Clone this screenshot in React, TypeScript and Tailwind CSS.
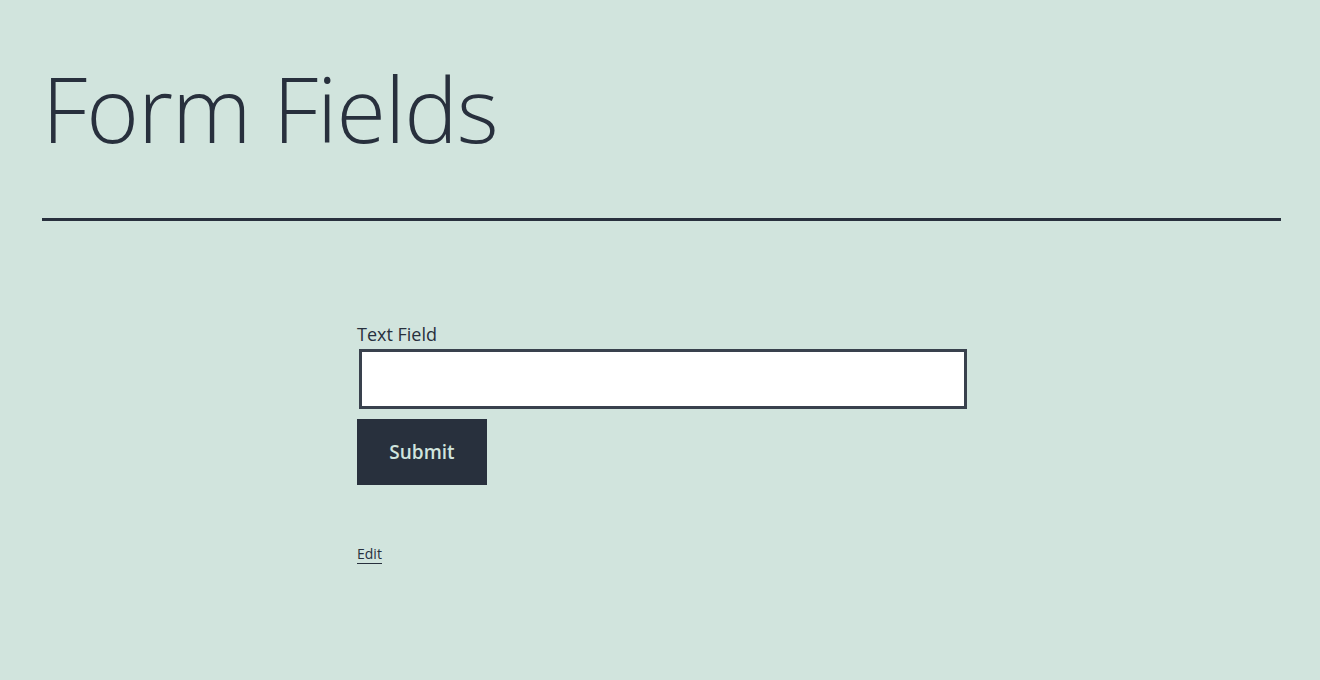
import React from 'react';

export default function App() {
  return (
    <div
      className="min-h-[680px] w-full bg-[#d1e4dd] text-[#28303d]"
      style={{ fontFamily: '"Open Sans", "Noto Sans", sans-serif' }}
    >
      {/* Header */}
      <header className="pl-[42px] pr-[39px] pt-[54px]">
        <h1 className="text-[90px] font-light leading-[1.2] tracking-[-1px]">Form Fields</h1>
        <div className="mt-[56px] h-[3px] bg-[#28303d]" />
      </header>

      {/* Content */}
      <main className="mx-auto w-[610px] pl-[2px] pt-[99px]">
        <form className="flex flex-col items-start" onSubmit={(e) => e.preventDefault()}>
          <label htmlFor="text-field" className="text-[18px] leading-[28px]">
            Text Field
          </label>
          <input
            id="text-field"
            type="text"
            className="ml-[2px] mt-[1px] h-[60px] w-[608px] border-[3px] border-[#39414d] bg-white px-3 outline-none"
          />
          <button
            type="submit"
            className="mt-[10px] h-[66px] w-[130px] bg-[#28303d] text-[19px] font-semibold text-[#d1e4dd]"
          >
            Submit
          </button>
        </form>
        <a href="#" className="mt-[60px] inline-block border-b border-[#28303d] text-[14px] leading-[18px]">
          Edit
        </a>
      </main>
    </div>
  );
}
